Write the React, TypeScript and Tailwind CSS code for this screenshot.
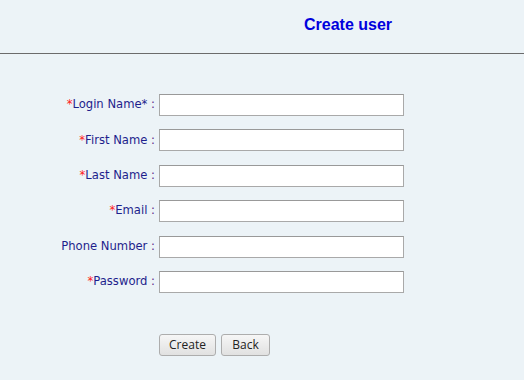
import React from "react";

const rows: { label: string; req: boolean; trail?: boolean }[] = [
  { label: "Login Name", req: true, trail: true },
  { label: "First Name", req: true },
  { label: "Last Name", req: true },
  { label: "Email", req: true },
  { label: "Phone Number", req: false },
  { label: "Password", req: true },
];

export default function App() {
  return (
    <div className="w-[524px] h-[380px] bg-[#ecf3f7] overflow-hidden">
      <div className="h-[54px] border-b border-[#6b6b6b] pl-[304px] pt-[14px]">
        <div className="text-[16px] font-bold text-[#0000dd] font-['Liberation_Sans',Arial,sans-serif] leading-[22px]">
          Create user
        </div>
      </div>
      <div className="pt-[40px] flex flex-col gap-[13.4px]">
        {rows.map((r) => (
          <div key={r.label} className="flex items-center h-[22px]">
            <div className="w-[159px] text-right pr-[4px] text-[11.6px] font-['DejaVu_Sans',Verdana,sans-serif] text-[#1e1e8c] whitespace-nowrap">
              {r.req && <span className="text-[#ff2020]">*</span>}
              {r.label}
              {r.trail && <span>*</span>}
              <span className="text-[#5a2a8a]"> :</span>
            </div>
            <input
              type="text"
              className="w-[245px] h-[22px] bg-white border border-[#a9a9a9] border-t-[#999] outline-none"
            />
          </div>
        ))}
      </div>
      <div className="pl-[159px] pt-[41px] flex gap-[5px]">
        <button className="w-[57px] h-[22px] rounded-[3px] border border-[#adadad] bg-gradient-to-b from-[#f6f6f6] to-[#e1e1e1] text-[12px] text-[#222] font-['Open_Sans','Noto_Sans',sans-serif] leading-none">
          Create
        </button>
        <button className="w-[49px] h-[22px] rounded-[3px] border border-[#adadad] bg-gradient-to-b from-[#f6f6f6] to-[#e1e1e1] text-[12px] text-[#222] font-['Open_Sans','Noto_Sans',sans-serif] leading-none">
          Back
        </button>
      </div>
    </div>
  );
}
